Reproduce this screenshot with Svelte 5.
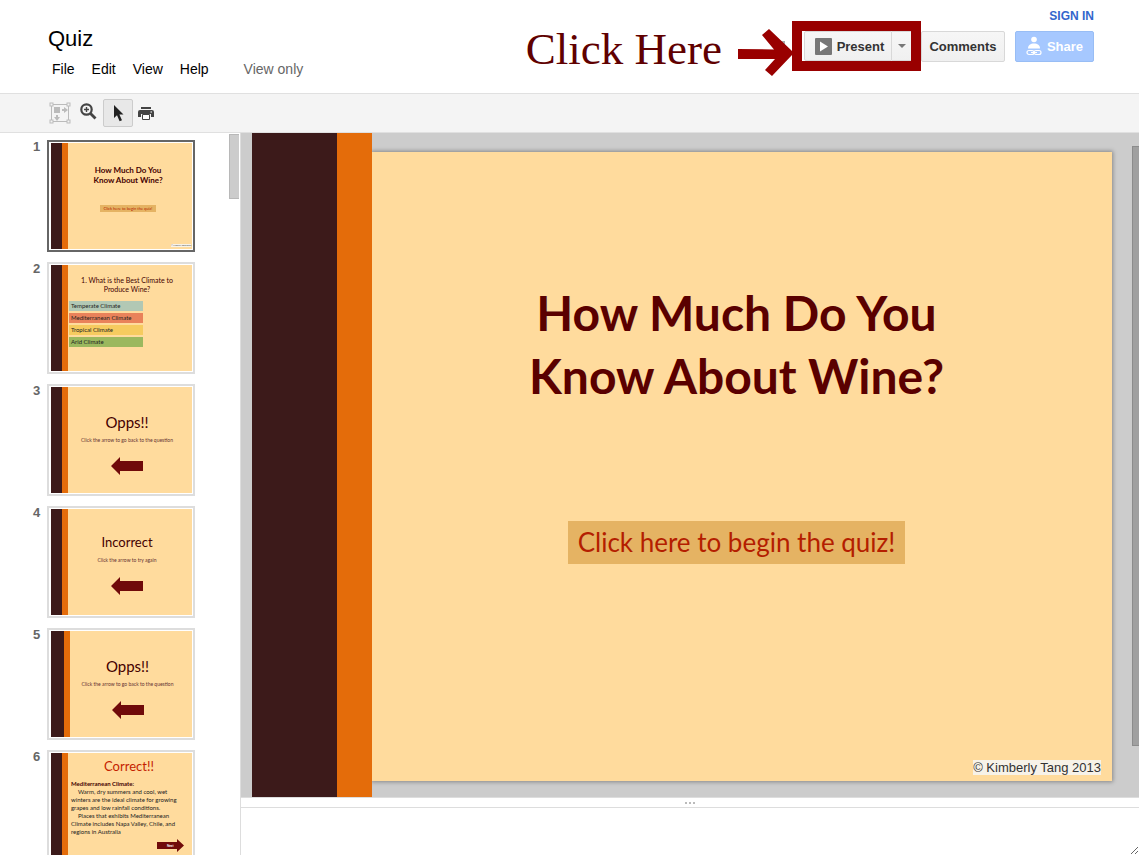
<script>
  let selected = 1;

  const menus = ['File', 'Edit', 'View', 'Help'];

  const slides = [
    { id: 1, type: 'cover' },
    { id: 2, type: 'question' },
    { id: 3, type: 'wrong', title: 'Opps!!', note: 'Click the arrow to go back to the question' },
    { id: 4, type: 'wrong', title: 'Incorrect', note: 'Click the arrow to try again', small: true },
    { id: 5, type: 'wrong', title: 'Opps!!', note: 'Click the arrow to go back to the question', wide: true },
    { id: 6, type: 'correct' }
  ];

  const answers = [
    { text: 'Temperate Climate', color: 'teal' },
    { text: 'Mediterranean Climate', color: 'coral' },
    { text: 'Tropical Climate', color: 'yellow' },
    { text: 'Arid Climate', color: 'green' }
  ];
</script>

<div class="app">
  <header>
    <div class="left">
      <h1>Quiz</h1>
      <nav>
        {#each menus as menu}
          <button class="menu">{menu}</button>
        {/each}
        <span class="view-only">View only</span>
      </nav>
    </div>
    <div class="right">
      <a class="sign-in" href="#signin">SIGN IN</a>
      <div class="actions">
        <span class="callout">Click Here</span>
        <svg class="pointer" width="54" height="56" viewBox="0 0 54 56">
          <path d="M36 19h11v7H36z" fill="#aaa" />
          <path d="M0 27L36 27.500L24 13L31 7L54 29V33L34 54L27 48L37 37L0 37Z" fill="#900" />
        </svg>
        <div class="frame">
          <button class="btn present">
            <svg width="17" height="17" viewBox="0 0 17 17">
              <rect width="17" height="17" rx="1" fill="#777" />
              <path d="M5 3.500L13 8.500L5 13.500Z" fill="#fff" />
            </svg>
            Present
          </button>
          <button class="btn caret" aria-label="Present options">
            <svg width="8" height="4" viewBox="0 0 8 4"><path d="M0 0H8L4 4Z" fill="#777" /></svg>
          </button>
        </div>
        <button class="btn comments">Comments</button>
        <button class="btn share">
          <svg width="16" height="20" viewBox="0 0 16 20">
            <circle cx="8" cy="3.500" r="2.800" fill="#fff" />
            <path d="M2 12.500C2 9 4.500 7.500 8 7.500S14 9 14 12.500Z" fill="#fff" />
            <g fill="none" stroke="#fff" stroke-width="1.200">
              <rect x="1" y="14.500" width="7" height="4" rx="2" />
              <rect x="8" y="14.500" width="7" height="4" rx="2" />
              <path d="M5 16.500H11" />
            </g>
          </svg>
          Share
        </button>
      </div>
    </div>
  </header>

  <div class="toolbar">
    <button class="tool" aria-label="Fit" disabled>
      <svg width="22" height="22" viewBox="0 0 22 22" fill="none" stroke="#bbb">
        <path d="M2.500 2.500H19.500V19.500H2.500Z" />
        <g fill="#f4f4f4">
          <rect x="1" y="1" width="3" height="3" />
          <rect x="18" y="1" width="3" height="3" />
          <rect x="1" y="18" width="3" height="3" />
          <rect x="18" y="18" width="3" height="3" />
        </g>
        <g fill="#bbb" stroke="none">
          <path d="M5 5h6v6H5z" />
          <path d="M13 7h2V5l4 3-4 3V9h-2z" />
          <path d="M7 13h2v2h2l-3 4-3-4h2z" />
        </g>
      </svg>
    </button>
    <button class="tool zoom" aria-label="Zoom">
      <svg width="17" height="17" viewBox="0 0 17 17" fill="none" stroke="#444">
        <circle cx="6.500" cy="6.500" r="5.200" stroke-width="2.200" />
        <path d="M10.500 10.500L15.500 15.500" stroke-width="2.800" />
        <path d="M6.500 4V9M4 6.500H9" stroke-width="1.400" />
      </svg>
    </button>
    <button class="tool active" aria-label="Select">
      <svg width="11" height="17" viewBox="0 0 11 17">
        <path d="M1 0V13L4 10.300L6.600 16.300L9 15.200L6.400 9.400H10.500Z" fill="#222" />
      </svg>
    </button>
    <button class="tool" aria-label="Print">
      <svg width="16" height="15" viewBox="0 0 16 15">
        <path d="M3 1H13V3H3Z" fill="#444" />
        <path d="M2 4H14Q16 4 16 6V11H13V8H3V11H0V6Q0 4 2 4Z" fill="#444" />
        <path d="M4.500 8.500H11.500V13.500H4.500Z" fill="#fff" stroke="#444" />
        <path d="M12.500 5.500h1.500v1h-1.500z" fill="#fff" />
      </svg>
    </button>
  </div>

  <main>
    <aside>
      <ol>
        {#each slides as slide}
          <li>
            <span class="number">{slide.id}</span>
            <button
              class="thumb"
              class:selected={selected === slide.id}
              aria-label="Slide {slide.id}"
              on:click={() => (selected = slide.id)}
            >
              <span class="brown" class:wide={slide.wide}></span>
              <span class="orange"></span>
              <span class="mini {slide.type}" class:small={slide.small}>
                {#if slide.type === 'cover'}
                  <b>How Much Do You<br />Know About Wine?</b>
                  <span class="mini-link">Click here to begin the quiz!</span>
                  <span class="mini-copy">© Kimberly Tang 2013</span>
                {:else if slide.type === 'question'}
                  <span class="mini-question">1. What is the Best Climate to<br />Produce Wine?</span>
                  {#each answers as answer}
                    <span class="answer {answer.color}">{answer.text}</span>
                  {/each}
                {:else if slide.type === 'wrong'}
                  <span class="mini-title">{slide.title}</span>
                  <span class="mini-note">{slide.note}</span>
                  <svg width="32" height="18" viewBox="0 0 32 18">
                    <path d="M0 9L9 0V4H32V14H9V18Z" fill="#700a0a" />
                  </svg>
                {:else}
                  <span class="mini-title">Correct!!</span>
                  <span class="mini-body">
                    <b>Mediterranean Climate:</b>
                    <span>Warm, dry summers and cool, wet<br />winters are the ideal climate for growing<br />grapes and low rainfall conditions.</span>
                    <span>Places that exhibits Mediterranean<br />Climate includes Napa Valley, Chile, and<br />regions in Australia</span>
                  </span>
                  <span class="next">
                    <svg width="27" height="13" viewBox="0 0 27 13">
                      <path d="M27 6.500L20 0V3H0V10H20V13Z" fill="#700a0a" />
                      <text x="10" y="8" font-size="3" font-weight="bold" fill="#fff">Next</text>
                    </svg>
                  </span>
                {/if}
              </span>
            </button>
          </li>
        {/each}
      </ol>
      <div class="scroll side-scroll"></div>
    </aside>

    <section>
      <div class="stage">
        <div class="stripe-brown"></div>
        <div class="stripe-orange"></div>
        <div class="slide">
          <h2>How Much Do You<br />Know About Wine?</h2>
          <a class="begin" href="#quiz">Click here to begin the quiz!</a>
          <span class="copyright">© Kimberly Tang 2013</span>
        </div>
        <div class="scroll stage-scroll"></div>
      </div>
      <div class="splitter"><i></i><i></i><i></i></div>
      <textarea aria-label="Speaker notes" readonly></textarea>
    </section>
  </main>
</div>

<style>
  :global(body) {
    margin: 0;
    background: #fff;
  }

  .app {
    display: flex;
    flex-direction: column;
    height: 100vh;
    overflow: hidden;
    font-family: "Liberation Sans", Arial, sans-serif;
    color: #000;
  }

  button {
    font-family: inherit;
    color: inherit;
    background: none;
    border: 0;
    padding: 0;
    cursor: pointer;
  }

  svg {
    display: block;
    flex: none;
  }

  header {
    display: flex;
    justify-content: space-between;
    height: 93px;
    padding: 0 45px 0 48px;
    border-bottom: 1px solid #e0e0e0;
    flex: none;
  }

  h1 {
    margin: 26px 0 0;
    font-size: 22px;
    line-height: 25px;
    font-weight: normal;
  }

  nav {
    display: flex;
    gap: 17px;
    margin-top: 10px;
    padding-left: 4px;
    font-size: 14px;
    line-height: 16px;
  }

  .menu {
    font-size: 14px;
    line-height: 16px;
  }

  .view-only {
    margin-left: 18px;
    color: #666;
  }

  .right {
    display: flex;
    flex-direction: column;
    align-items: flex-end;
  }

  .sign-in {
    margin-top: 10px;
    font-size: 12px;
    line-height: 12px;
    font-weight: bold;
    color: #36c;
    text-decoration: none;
  }

  .actions {
    display: flex;
    align-items: center;
    height: 48px;
  }

  .callout {
    padding-top: 6px;
    font-family: "Liberation Serif", serif;
    font-size: 45px;
    line-height: 50px;
    color: #600000;
    white-space: nowrap;
  }

  .pointer {
    margin-left: 16px;
    align-self: flex-start;
  }

  .frame {
    display: flex;
    border: 10px solid #900;
    padding-left: 2px;
  }

  .btn {
    display: flex;
    align-items: center;
    justify-content: center;
    box-sizing: border-box;
    height: 31px;
    border: 1px solid #d8d8d8;
    border-radius: 2px;
    background: linear-gradient(#f6f6f6, #f0f0f0);
    font-size: 13px;
    font-weight: bold;
    color: #333;
  }

  .present {
    width: 88px;
    height: 30px;
    padding-left: 3px;
    gap: 5px;
    border-radius: 2px 0 0 2px;
  }

  .caret {
    width: 19px;
    height: 30px;
    border-left: 0;
    border-right: 0;
    border-radius: 0;
  }

  .comments {
    width: 84px;
    margin-right: 10px;
  }

  .share {
    width: 79px;
    gap: 5px;
    color: #fff;
    background: #a6c8ff;
    border-color: #98bdf5;
  }

  .toolbar {
    display: flex;
    align-items: center;
    height: 38px;
    padding-left: 45px;
    background: #f4f4f4;
    border-bottom: 1px solid #e0e0e0;
    flex: none;
  }

  .tool {
    display: flex;
    align-items: center;
    justify-content: center;
    box-sizing: border-box;
    width: 30px;
    height: 28px;
    margin-right: -2px;
  }

  .tool.zoom {
    margin-right: 0;
    padding-bottom: 3px;
  }

  .tool.active {
    border: 1px solid #ccc;
    border-radius: 2px;
    background: #e8e8e8;
  }

  main {
    display: flex;
    flex: 1;
    min-height: 0;
  }

  aside {
    position: relative;
    width: 240px;
    overflow: hidden;
    border-right: 1px solid #ddd;
    flex: none;
  }

  ol {
    display: flex;
    flex-direction: column;
    gap: 10px;
    margin: 0;
    padding: 7px 0 0 33px;
    list-style: none;
  }

  li {
    display: flex;
  }

  .number {
    width: 14px;
    font-size: 13px;
    line-height: 14px;
    font-weight: bold;
    color: #666;
  }

  .thumb {
    display: flex;
    box-sizing: border-box;
    width: 148px;
    height: 112px;
    border: 2px solid #ddd;
    padding: 1px 1px 1px 2px;
    font-family: Lato, Calibri, sans-serif;
    text-align: center;
    color: #400;
  }

  .thumb.selected {
    border-color: #666;
  }

  .brown {
    width: 11px;
    background: #3c1a1a;
    flex: none;
  }

  .brown.wide {
    width: 13px;
  }

  .orange {
    width: 6px;
    background: #e46c0a;
    flex: none;
  }

  .mini {
    display: flex;
    flex-direction: column;
    align-items: center;
    box-sizing: border-box;
    flex: 1;
    padding-right: 6px;
    background: #ffdb9d;
    white-space: nowrap;
    overflow: hidden;
  }

  .wide ~ .mini {
    padding-right: 7px;
  }

  .cover {
    padding: 22px 1px 2px 0;
  }

  .cover b {
    margin-right: 3px;
    font-size: 8px;
    line-height: 10px;
  }

  .mini-link {
    margin: 20px 3px 0 0;
    padding: 0 4px;
    font-size: 4px;
    line-height: 7px;
    color: #b41e00;
    background: #e5b363;
  }

  .mini-copy {
    margin-top: auto;
    align-self: flex-end;
    font-family: "Liberation Sans", sans-serif;
    font-size: 2px;
    line-height: 3px;
    color: #333;
    background: #f7f2e8;
  }

  .question {
    gap: 2px;
    padding: 11px 7px 0 1px;
  }

  .mini-question {
    margin-bottom: 5px;
    font-size: 7px;
    line-height: 9px;
  }

  .answer {
    align-self: flex-start;
    box-sizing: border-box;
    width: 74px;
    padding-left: 2px;
    font-size: 6px;
    line-height: 10px;
    text-align: left;
    color: #222;
  }

  .teal { background: #b2c8b4; }
  .coral { background: #e9825a; }
  .yellow { background: #f6cb5f; }
  .green { background: #9bb85e; }

  .wrong {
    padding-top: 27px;
  }

  .wrong.small {
    padding-top: 25px;
  }

  .mini-title {
    font-size: 15px;
    line-height: 17px;
  }

  .small .mini-title {
    font-size: 13px;
  }

  .mini-note {
    margin: 5px 0 13px;
    font-size: 5px;
    line-height: 8px;
    color: #633;
  }

  .correct {
    align-items: stretch;
    padding: 5px 8px 0 3px;
  }

  .correct .mini-title {
    padding-left: 3px;
    font-size: 13px;
    color: #c41e00;
  }

  .mini-body {
    display: flex;
    flex-direction: column;
    margin-top: 5px;
    text-align: left;
    font-size: 6px;
    line-height: 8px;
    color: #222;
  }

  .mini-body span {
    text-indent: 7px;
  }

  .mini-body b {
    color: #400;
  }

  .next {
    align-self: flex-end;
    margin-top: 3px;
  }

  .scroll {
    position: absolute;
    box-sizing: border-box;
  }

  .side-scroll {
    top: 1px;
    right: 1px;
    width: 10px;
    height: 65px;
    background: #ccc;
    border: 1px solid #b8b8b8;
    border-right: 0;
  }

  section {
    display: flex;
    flex-direction: column;
    flex: 1;
    min-width: 0;
  }

  .stage {
    position: relative;
    display: flex;
    flex: 1;
    padding: 0 27px 0 11px;
    background: #ccc;
  }

  .stage-scroll {
    top: 13px;
    right: 0;
    bottom: 51px;
    width: 7px;
    background: #a0a0a0;
    border: 1px solid #8c8c8c;
    border-right: 0;
  }

  .stripe-brown {
    width: 85px;
    background: #3c1a1a;
  }

  .stripe-orange {
    width: 35px;
    background: #e46c0a;
    z-index: 1;
  }

  .slide {
    display: flex;
    flex-direction: column;
    align-items: center;
    flex: 1;
    margin: 19px 0 16px;
    background: #ffdb9d;
    box-shadow: 0 0 4px 1px #888;
  }

  h2 {
    margin: 129px 11px 0 0;
    font-family: Lato, Calibri, sans-serif;
    font-size: 48px;
    line-height: 63px;
    font-weight: bold;
    text-align: center;
    color: #5a0000;
  }

  .begin {
    margin: 114px 11px 0 0;
    padding: 0 10px;
    font-family: Lato, Calibri, sans-serif;
    font-size: 26px;
    line-height: 43px;
    color: #b41e00;
    background: #e5b363;
    text-decoration: none;
  }

  .copyright {
    align-self: flex-end;
    margin: auto 11px 6px 0;
    font-size: 13px;
    line-height: 15px;
    color: #333;
    background: #f7f2e8;
  }

  .splitter {
    display: flex;
    align-items: center;
    justify-content: center;
    gap: 2px;
    height: 9px;
    border-top: 1px solid #ddd;
    border-bottom: 1px solid #ddd;
    flex: none;
  }

  .splitter i {
    width: 2px;
    height: 2px;
    background: #bbb;
  }

  textarea {
    display: block;
    box-sizing: border-box;
    width: 100%;
    height: 47px;
    border: 0;
    outline: 0;
    resize: vertical;
  }
</style>
